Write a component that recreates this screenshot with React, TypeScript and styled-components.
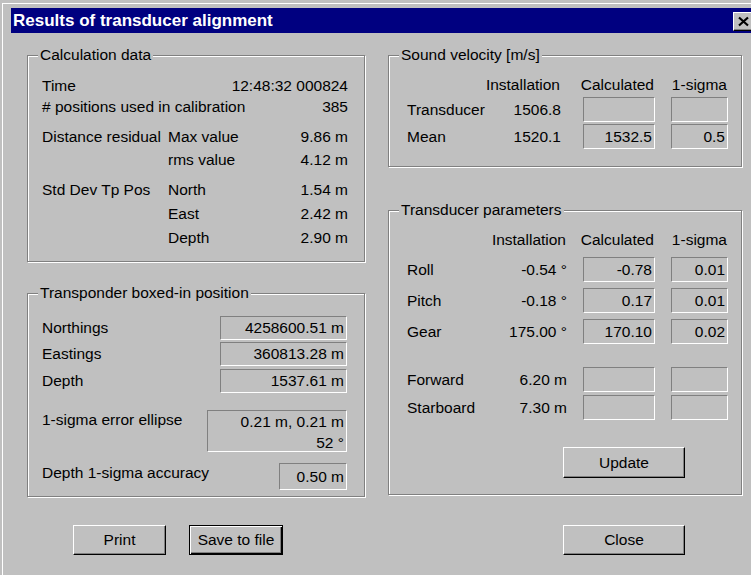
import React from 'react';
import styled, { createGlobalStyle } from 'styled-components';

const GlobalStyle = createGlobalStyle`
  html, body {
    margin: 0;
    padding: 0;
    background: #c0c0c0;
  }
  body {
    font-family: "Liberation Sans", Arial, sans-serif;
  }
`;

const Screen = styled.div`
  width: 751px;
  height: 575px;
  overflow: hidden;
  box-sizing: border-box;
  padding: 3px 0 0 2px;
  background: #c0c0c0;
  font-family: "Liberation Sans", Arial, sans-serif;
  font-size: 15.5px;
  color: #000;
`;

const Window = styled.div`
  box-sizing: border-box;
  height: 100%;
  border-top: 1px solid #fff;
  border-left: 1px solid #fff;
  padding: 4px 0 0 8px;
`;

const TitleBar = styled.div`
  height: 25px;
  background: #000080;
  display: flex;
  align-items: flex-start;
  justify-content: space-between;
  padding-left: 2px;
`;

const TitleText = styled.span`
  color: #fff;
  font-weight: bold;
  font-size: 17px;
  line-height: 25px;
  white-space: nowrap;
`;

const CloseBox = styled.div`
  box-sizing: border-box;
  width: 23px;
  height: 19px;
  margin-top: 4px;
  margin-right: -5px;
  background: #c0c0c0;
  border-style: solid;
  border-width: 1px;
  border-color: #fff #000 #000 #fff;
  box-shadow: inset -1px -1px #808080;
  display: flex;
  align-items: center;
  padding-left: 3px;
`;

const Body = styled.div`
  display: grid;
  grid-template-columns: 338px 354px;
  column-gap: 23px;
  row-gap: 28px;
  padding: 22px 0 0 16px;
`;

const Column = styled.div<{ $gap: number }>`
  display: flex;
  flex-direction: column;
  gap: ${(p) => p.$gap}px;
`;

const Group = styled.section<{ $h: number }>`
  position: relative;
  box-sizing: border-box;
  height: ${(p) => p.$h}px;
  border: 1px solid #808080;
  box-shadow: inset 1px 1px #fff, 1px 1px #fff;
`;

const Caption = styled.span`
  position: absolute;
  top: -10px;
  left: 10px;
  padding: 0 2px;
  line-height: 18px;
  background: #c0c0c0;
  white-space: nowrap;
`;

/* ---- Calculation data ---- */

const CalcBody = styled.div`
  padding: 19px 16px 0 14px;
`;

const CalcSection = styled.div<{ $mt: number }>`
  margin-top: ${(p) => p.$mt}px;
`;

const CalcRow = styled.div<{ $h: number }>`
  display: grid;
  grid-template-columns: 126px 1fr auto;
  align-items: center;
  height: ${(p) => p.$h}px;
  white-space: nowrap;
`;

const CalcValue = styled.span`
  text-align: right;
`;

/* ---- Sunken read-only fields ---- */

const Field = styled.div<{ $w: number; $h: number; $top?: boolean }>`
  box-sizing: border-box;
  width: ${(p) => p.$w}px;
  height: ${(p) => p.$h}px;
  border-style: solid;
  border-width: 1px;
  border-color: #808080 #fff #fff #808080;
  padding: 0 2px;
  display: flex;
  flex-direction: column;
  justify-content: ${(p) => (p.$top ? 'flex-start' : 'center')};
  align-items: flex-end;
  line-height: ${(p) => (p.$top ? '21px' : '1')};
  white-space: nowrap;
`;

/* ---- Transponder position ---- */

const PosBody = styled.div`
  padding: 22px 17px 0 14px;
  display: flex;
  flex-direction: column;
`;

const PosRow = styled.div<{ $mt: number; $top?: boolean }>`
  display: flex;
  justify-content: space-between;
  align-items: ${(p) => (p.$top ? 'flex-start' : 'center')};
  margin-top: ${(p) => p.$mt}px;
  white-space: nowrap;
`;

const PosLabel = styled.span<{ $pt?: number }>`
  padding-top: ${(p) => p.$pt ?? 0}px;
  line-height: 18px;
`;

/* ---- Velocity / parameter tables ---- */

const TableBody = styled.div`
  padding: 0 0 0 18px;
  display: flex;
  flex-direction: column;
`;

const TableRow = styled.div<{ $inst: number; $h: number; $mt: number }>`
  display: grid;
  grid-template-columns: 90px ${(p) => p.$inst}px ${(p) => 158 - p.$inst}px 73px;
  align-items: center;
  height: ${(p) => p.$h}px;
  margin-top: ${(p) => p.$mt}px;
  white-space: nowrap;
`;

const RightCell = styled.span`
  justify-self: end;
  text-align: right;
`;

const HeadCell = styled.span`
  justify-self: end;
  padding-right: 1px;
`;

const BoxCell = styled.div`
  justify-self: end;
`;

/* ---- Buttons ---- */

const ButtonRow = styled.div<{ $pl: number }>`
  display: flex;
  gap: 23px;
  padding-left: ${(p) => p.$pl}px;
`;

const Button = styled.button<{ $w: number; $h?: number; $default?: boolean }>`
  box-sizing: border-box;
  width: ${(p) => p.$w}px;
  height: ${(p) => p.$h ?? 30}px;
  margin: 0;
  padding: 0;
  background: #c0c0c0;
  font-family: "Liberation Sans", Arial, sans-serif;
  font-size: 15.5px;
  color: #000;
  border-style: solid;
  border-width: 1px;
  border-color: ${(p) => (p.$default ? '#000' : '#fff #000 #000 #fff')};
  box-shadow: ${(p) =>
    p.$default
      ? 'inset 1px 1px #fff, inset -1px -1px #000, inset -2px -2px #808080'
      : 'inset -1px -1px #808080'};
  cursor: default;
`;

const UpdateRow = styled.div`
  margin-top: 27px;
  padding-left: 156px;
`;

type Row = { label: string; inst: string; calc?: string; sigma?: string };

const velocityRows: Row[] = [
  { label: 'Transducer', inst: '1506.8' },
  { label: 'Mean', inst: '1520.1', calc: '1532.5', sigma: '0.5' },
];

const angleRows: Row[] = [
  { label: 'Roll', inst: '-0.54 °', calc: '-0.78', sigma: '0.01' },
  { label: 'Pitch', inst: '-0.18 °', calc: '0.17', sigma: '0.01' },
  { label: 'Gear', inst: '175.00 °', calc: '170.10', sigma: '0.02' },
];

const offsetRows: Row[] = [
  { label: 'Forward', inst: '6.20 m' },
  { label: 'Starboard', inst: '7.30 m' },
];

function ParamRow({ row, inst, h, mt }: { row: Row; inst: number; h: number; mt: number }) {
  return (
    <TableRow $inst={inst} $h={h} $mt={mt}>
      <span>{row.label}</span>
      <RightCell>{row.inst}</RightCell>
      <BoxCell>
        <Field $w={72} $h={h}>{row.calc ?? ''}</Field>
      </BoxCell>
      <BoxCell>
        <Field $w={57} $h={h}>{row.sigma ?? ''}</Field>
      </BoxCell>
    </TableRow>
  );
}

function TableHead({ inst }: { inst: number }) {
  return (
    <TableRow $inst={inst} $h={20} $mt={19}>
      <span />
      <HeadCell>Installation</HeadCell>
      <HeadCell>Calculated</HeadCell>
      <HeadCell>1-sigma</HeadCell>
    </TableRow>
  );
}

export default function App() {
  return (
    <Screen>
      <GlobalStyle />
      <Window>
        <TitleBar>
          <TitleText>Results of transducer alignment</TitleText>
          <CloseBox>
            <svg width="13" height="11" viewBox="0 0 13 11">
              <path d="M2 1.5 L11 9.5 M11 1.5 L2 9.5" stroke="#000" strokeWidth="2.2" fill="none" />
            </svg>
          </CloseBox>
        </TitleBar>

        <Body>
          <Column $gap={31}>
            <Group $h={207}>
              <Caption>Calculation data</Caption>
              <CalcBody>
                <CalcSection $mt={0}>
                  <CalcRow $h={21}>
                    <span>Time</span>
                    <span />
                    <CalcValue>12:48:32 000824</CalcValue>
                  </CalcRow>
                  <CalcRow $h={21}>
                    <span># positions used in calibration</span>
                    <span />
                    <CalcValue>385</CalcValue>
                  </CalcRow>
                </CalcSection>
                <CalcSection $mt={8}>
                  <CalcRow $h={23}>
                    <span>Distance residual</span>
                    <span>Max value</span>
                    <CalcValue>9.86 m</CalcValue>
                  </CalcRow>
                  <CalcRow $h={23}>
                    <span />
                    <span>rms value</span>
                    <CalcValue>4.12 m</CalcValue>
                  </CalcRow>
                </CalcSection>
                <CalcSection $mt={7}>
                  <CalcRow $h={24}>
                    <span>Std Dev Tp Pos</span>
                    <span>North</span>
                    <CalcValue>1.54 m</CalcValue>
                  </CalcRow>
                  <CalcRow $h={24}>
                    <span />
                    <span>East</span>
                    <CalcValue>2.42 m</CalcValue>
                  </CalcRow>
                  <CalcRow $h={24}>
                    <span />
                    <span>Depth</span>
                    <CalcValue>2.90 m</CalcValue>
                  </CalcRow>
                </CalcSection>
              </CalcBody>
            </Group>

            <Group $h={204}>
              <Caption>Transponder boxed-in position</Caption>
              <PosBody>
                <PosRow $mt={0}>
                  <PosLabel>Northings</PosLabel>
                  <Field $w={127} $h={24}>4258600.51 m</Field>
                </PosRow>
                <PosRow $mt={2}>
                  <PosLabel>Eastings</PosLabel>
                  <Field $w={127} $h={24}>360813.28 m</Field>
                </PosRow>
                <PosRow $mt={3}>
                  <PosLabel>Depth</PosLabel>
                  <Field $w={127} $h={24}>1537.61 m</Field>
                </PosRow>
                <PosRow $mt={17} $top>
                  <PosLabel $pt={1}>1-sigma error ellipse</PosLabel>
                  <Field $w={140} $h={42} $top>
                    <span>0.21 m, 0.21 m</span>
                    <span>52 °</span>
                  </Field>
                </PosRow>
                <PosRow $mt={11} $top>
                  <PosLabel $pt={1}>Depth 1-sigma accuracy</PosLabel>
                  <Field $w={68} $h={27}>0.50 m</Field>
                </PosRow>
              </PosBody>
            </Group>
          </Column>

          <Column $gap={43}>
            <Group $h={112}>
              <Caption>Sound velocity [m/s]</Caption>
              <TableBody>
                <TableHead inst={64} />
                {velocityRows.map((r) => (
                  <ParamRow key={r.label} row={r} inst={64} h={25} mt={2} />
                ))}
              </TableBody>
            </Group>

            <Group $h={285}>
              <Caption>Transducer parameters</Caption>
              <TableBody>
                <TableHead inst={70} />
                {angleRows.map((r, i) => (
                  <ParamRow key={r.label} row={r} inst={70} h={25} mt={i === 0 ? 7 : 6} />
                ))}
                {offsetRows.map((r, i) => (
                  <ParamRow key={r.label} row={r} inst={70} h={25} mt={i === 0 ? 23 : 3} />
                ))}
                <UpdateRow>
                  <Button $w={122} $h={31}>Update</Button>
                </UpdateRow>
              </TableBody>
            </Group>
          </Column>

          <ButtonRow $pl={46}>
            <Button $w={93}>Print</Button>
            <Button $w={94} $default>Save to file</Button>
          </ButtonRow>
          <ButtonRow $pl={175}>
            <Button $w={122}>Close</Button>
          </ButtonRow>
        </Body>
      </Window>
    </Screen>
  );
}
